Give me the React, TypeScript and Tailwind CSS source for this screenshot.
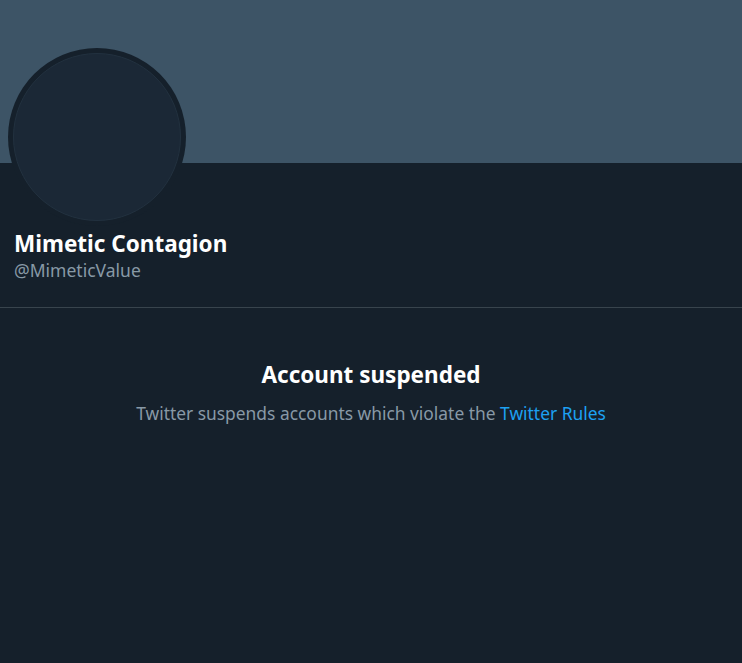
import React from "react";

const font = { fontFamily: '"Noto Sans", "Open Sans", Arial, sans-serif' };

export default function App() {
  return (
    <div className="min-h-[663px] w-full bg-[#15202b] text-white" style={font}>
      <div className="h-[163px] bg-[#3d5466]" />
      <div className="px-2">
        <div className="-mt-[115px] w-[178px] h-[178px] rounded-full bg-[#15202b] p-[5px]">
          <div className="w-full h-full rounded-full bg-[#1b2836] border border-[#22313f]" />
        </div>
      </div>
      <div className="px-[14px] pt-[3px] pb-[26px]">
        <h1 className="text-[22.5px] leading-[30px] font-bold">Mimetic Contagion</h1>
        <p className="text-[17.5px] leading-[22px] text-[#8899a6]">@MimeticValue</p>
      </div>
      <div className="border-t border-[#38444d]" />
      <div className="flex flex-col items-center pt-[52px]">
        <h2 className="text-[22.5px] leading-[30px] font-bold">Account suspended</h2>
        <p className="mt-[12px] text-[17.4px] leading-[22px] text-[#8899a6]">
          Twitter suspends accounts which violate the{" "}
          <a className="text-[#1da1f2]">Twitter Rules</a>
        </p>
      </div>
    </div>
  );
}
